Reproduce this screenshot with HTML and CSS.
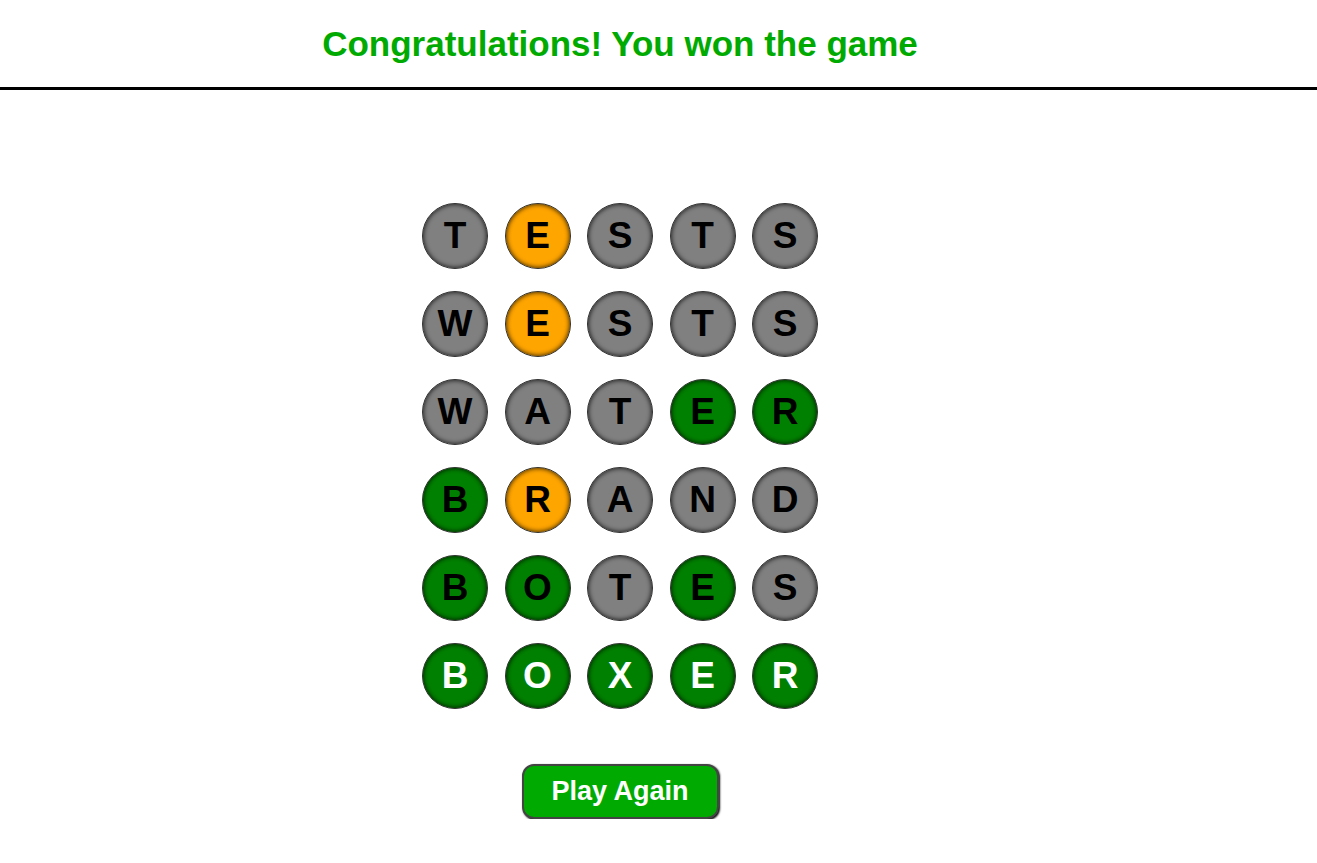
FILE: index.html
```html
<!DOCTYPE html>
<html>
<head>
<meta charset="utf-8">
<link rel="stylesheet" href="styles.css">
</head>
<body>
<header class="top">
  <h1 class="title">Congratulations! You won the game</h1>
</header>
<main class="main">
  <div class="board">
    <span class="cell gray">T</span><span class="cell orange">E</span><span class="cell gray">S</span><span class="cell gray">T</span><span class="cell gray">S</span>
    <span class="cell gray">W</span><span class="cell orange">E</span><span class="cell gray">S</span><span class="cell gray">T</span><span class="cell gray">S</span>
    <span class="cell gray">W</span><span class="cell gray">A</span><span class="cell gray">T</span><span class="cell green">E</span><span class="cell green">R</span>
    <span class="cell green">B</span><span class="cell orange">R</span><span class="cell gray">A</span><span class="cell gray">N</span><span class="cell gray">D</span>
    <span class="cell green">B</span><span class="cell green">O</span><span class="cell gray">T</span><span class="cell green">E</span><span class="cell gray">S</span>
    <span class="cell green final">B</span><span class="cell green final">O</span><span class="cell green final">X</span><span class="cell green final">E</span><span class="cell green final">R</span>
  </div>
  <button class="again">Play Again</button>
</main>
</body>
</html>
```
FILE: styles.css
```css
html, body {
  margin: 0;
  padding: 0;
  background: #fff;
  font-family: "Liberation Sans", Arial, sans-serif;
}
.top {
  border-bottom: 3px solid #000;
  height: 87px;
  display: flex;
  justify-content: flex-start;
}
.title {
  width: 1240px;
  margin: 0;
  padding-top: 25px;
  text-align: center;
  font-size: 35px;
  font-weight: bold;
  color: #00aa00;
  line-height: 38px;
}
.main {
  width: 1240px;
  display: flex;
  flex-direction: column;
  align-items: center;
  padding-top: 113px;
}
.board {
  display: grid;
  grid-template-columns: repeat(5, 66px);
  grid-auto-rows: 66px;
  column-gap: 16.5px;
  row-gap: 22px;
}
.cell {
  box-sizing: border-box;
  width: 66px;
  height: 66px;
  border-radius: 50%;
  border: 1px solid #333;
  box-shadow: inset 0 0 5px rgba(0,0,0,0.9);
  display: flex;
  align-items: center;
  justify-content: center;
  font-size: 37px;
  font-weight: bold;
  color: #000;
}
.gray { background: #808080; }
.orange { background: #ffa500; }
.green { background: #008000; }
.final { color: #fff; }
.again {
  margin-top: 55px;
  width: 197px;
  height: 55px;
  box-sizing: border-box;
  background: #00aa00;
  border: 2px solid #444;
  border-radius: 12px;
  box-shadow: 1px 1px 2px #000;
  color: #fff;
  font-family: "Liberation Sans", Arial, sans-serif;
  font-size: 27px;
  font-weight: bold;
  padding: 0;
}
```
